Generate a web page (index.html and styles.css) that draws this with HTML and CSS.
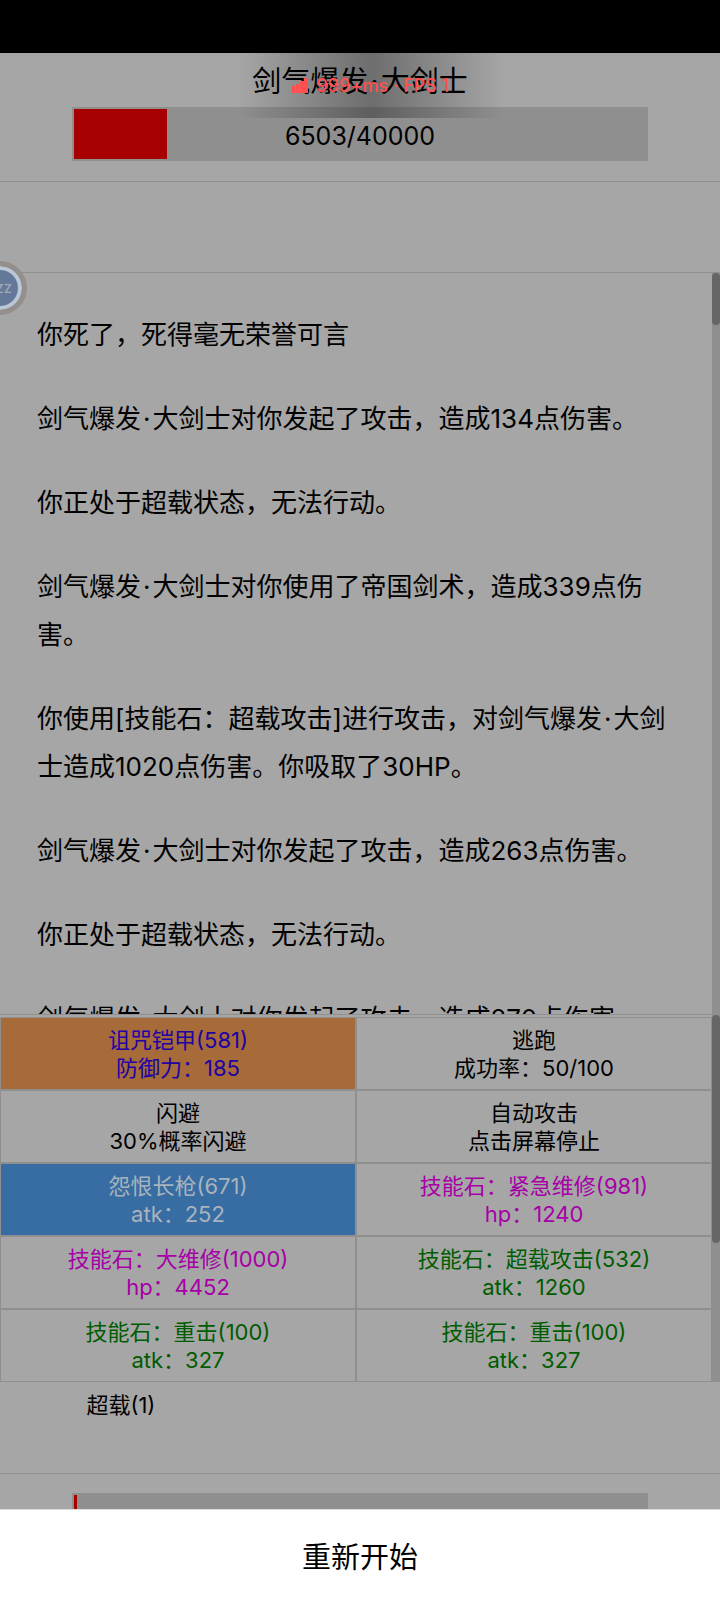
FILE: index.html
```html
<!DOCTYPE html>
<html lang="zh-CN">
<head>
<meta charset="utf-8">
<meta name="viewport" content="width=device-width, initial-scale=1">
<title>战斗</title>
<link rel="stylesheet" href="styles.css">
</head>
<body>
<div class="status-bar"></div>
<main class="battle">
  <header class="enemy">
    <h1 class="enemy-name">剑气爆发<span class="dot">·</span>大剑士</h1>
    <div class="health">
      <div class="health-fill" style="width:16.26%"></div>
      <span class="health-text">6503/40000</span>
    </div>
    <div class="hud">
      <svg class="hud-icon" viewBox="0 0 16 15" aria-hidden="true"><path d="M0 8h3v7H0zM4 6h3v9H4zM8 3h4v12H8zM12 0h4v15h-4z" fill="currentColor"/></svg>
      <span>999+ms · FPS 1</span>
    </div>
  </header>
  <div class="effects"></div>
  <section class="log-pane">
    <div class="log">
      <p>你死了，死得毫无荣誉可言</p>
      <p>剑气爆发<span class="dot">·</span>大剑士对你发起了攻击，造成134点伤害。</p>
      <p>你正处于超载状态，无法行动。</p>
      <p>剑气爆发<span class="dot">·</span>大剑士对你使用了帝国剑术，造成339点伤害。</p>
      <p>你使用[技能石：超载攻击]进行攻击，对剑气爆发<span class="dot">·</span>大剑士造成1020点伤害。你吸取了30HP。</p>
      <p>剑气爆发<span class="dot">·</span>大剑士对你发起了攻击，造成263点伤害。</p>
      <p>你正处于超载状态，无法行动。</p>
      <p>剑气爆发<span class="dot">·</span>大剑士对你发起了攻击，造成270点伤害。</p>
    </div>
    <div class="track"><div class="thumb thumb-log"></div></div>
    <div class="bubble">zz</div>
  </section>
  <section class="actions-pane">
    <div class="actions">
      <button class="action armor"><span>诅咒铠甲(581)</span><span>防御力：185</span></button>
      <button class="action"><span>逃跑</span><span>成功率：50/100</span></button>
      <button class="action"><span>闪避</span><span>30%概率闪避</span></button>
      <button class="action"><span>自动攻击</span><span>点击屏幕停止</span></button>
      <button class="action weapon"><span>怨恨长枪(671)</span><span>atk：252</span></button>
      <button class="action heal"><span>技能石：紧急维修(981)</span><span>hp：1240</span></button>
      <button class="action heal"><span>技能石：大维修(1000)</span><span>hp：4452</span></button>
      <button class="action skill"><span>技能石：超载攻击(532)</span><span>atk：1260</span></button>
      <button class="action skill"><span>技能石：重击(100)</span><span>atk：327</span></button>
      <button class="action skill"><span>技能石：重击(100)</span><span>atk：327</span></button>
    </div>
    <div class="track"><div class="thumb thumb-actions"></div></div>
  </section>
  <div class="buffs">超载(1)</div>
  <footer class="player">
    <div class="health"><div class="health-fill" style="width:0.6%"></div></div>
  </footer>
</main>
<button class="restart">重新开始</button>
</body>
</html>
```
FILE: styles.css
```css
* {
  box-sizing: border-box;
}

body {
  margin: 0;
  height: 100vh;
  display: flex;
  flex-direction: column;
  overflow: hidden;
  background: #a6a6a6;
  color: #000;
  font-family: Inter, "Noto Sans CJK SC", sans-serif;
  font-size: 26px;
}

button {
  font: inherit;
  color: inherit;
  margin: 0;
}

.status-bar {
  flex: none;
  height: 53px;
  background: #000;
}

.battle {
  flex: 1;
  min-height: 0;
  display: flex;
  flex-direction: column;
}

.enemy {
  position: relative;
  flex: none;
  padding: 8px 10% 20px;
  border-bottom: 1px solid #8f8f8f;
}

.enemy-name {
  margin: 0;
  padding-bottom: 4px;
  font-size: 29px;
  line-height: 42px;
  font-weight: 400;
  text-align: center;
}

.dot {
  padding: 0 2px;
}

.health {
  position: relative;
  height: 54px;
  padding: 2px;
  background: #8f8f8f;
}

.health-fill {
  height: 100%;
  background: #a60000;
}

.health-text {
  position: absolute;
  inset: 0;
  font-size: 25px;
  line-height: 58px;
  text-align: center;
}

.hud {
  position: absolute;
  top: 0;
  left: 33%;
  right: 30%;
  height: 65px;
  display: flex;
  align-items: center;
  justify-content: center;
  gap: 8px;
  background: linear-gradient(90deg, rgba(0, 0, 0, 0), rgba(0, 0, 0, 0.34) 50%, rgba(0, 0, 0, 0));
  color: #ff4f4f;
  font-size: 18px;
  font-weight: 500;
  white-space: nowrap;
}

.hud-icon {
  width: 16px;
  height: 15px;
}

.effects {
  flex: none;
  height: 91px;
  border-bottom: 1px solid #8f8f8f;
}

.log-pane {
  position: relative;
  flex: 1;
  min-height: 0;
  display: flex;
}

.log {
  flex: 1;
  overflow: hidden;
  padding: 38px 37px 0;
  line-height: 48px;
}

.log p {
  margin: 0 0 36px;
}

.track {
  flex: none;
  width: 8px;
  background: #8f8f8f;
}

.thumb {
  border-radius: 4px;
  background: #666;
}

.thumb-log {
  height: 52px;
}

.thumb-actions {
  height: 62%;
}

.bubble {
  position: absolute;
  top: -12px;
  left: -27px;
  width: 54px;
  height: 54px;
  padding-right: 10px;
  border: 5px solid #958f8b;
  border-radius: 50%;
  background: #64799a;
  box-shadow: inset 0 0 0 4px #bcc7d6;
  color: #a3aab5;
  font-size: 15px;
  line-height: 44px;
  text-align: right;
}

.actions-pane {
  flex: none;
  display: flex;
  border-top: 1px solid #8f8f8f;
}

.actions {
  flex: 1;
  display: grid;
  grid-template-columns: 1fr 1fr;
  padding-top: 2px;
}

.action {
  display: flex;
  flex-direction: column;
  align-items: center;
  padding: 8px 0 7px;
  border: 1px solid #8f8f8f;
  background: none;
  font-size: 22px;
  line-height: 28px;
}

.armor {
  background: #a66b38;
  color: #2000a6;
}

.weapon {
  background: #376da3;
  color: #a9b3bd;
}

.heal {
  color: #a600a6;
}

.skill {
  color: #005c00;
}

.buffs {
  flex: none;
  height: 91px;
  padding: 8px 12%;
  font-size: 22px;
  line-height: 30px;
}

.player {
  flex: none;
  height: 36px;
  overflow: hidden;
  padding: 19px 10% 0;
  border-top: 1px solid #8f8f8f;
}

.restart {
  flex: none;
  height: 91px;
  border: 0;
  border-top: 1px solid #dcdcdc;
  background: #fff;
  font-size: 29px;
}
```
